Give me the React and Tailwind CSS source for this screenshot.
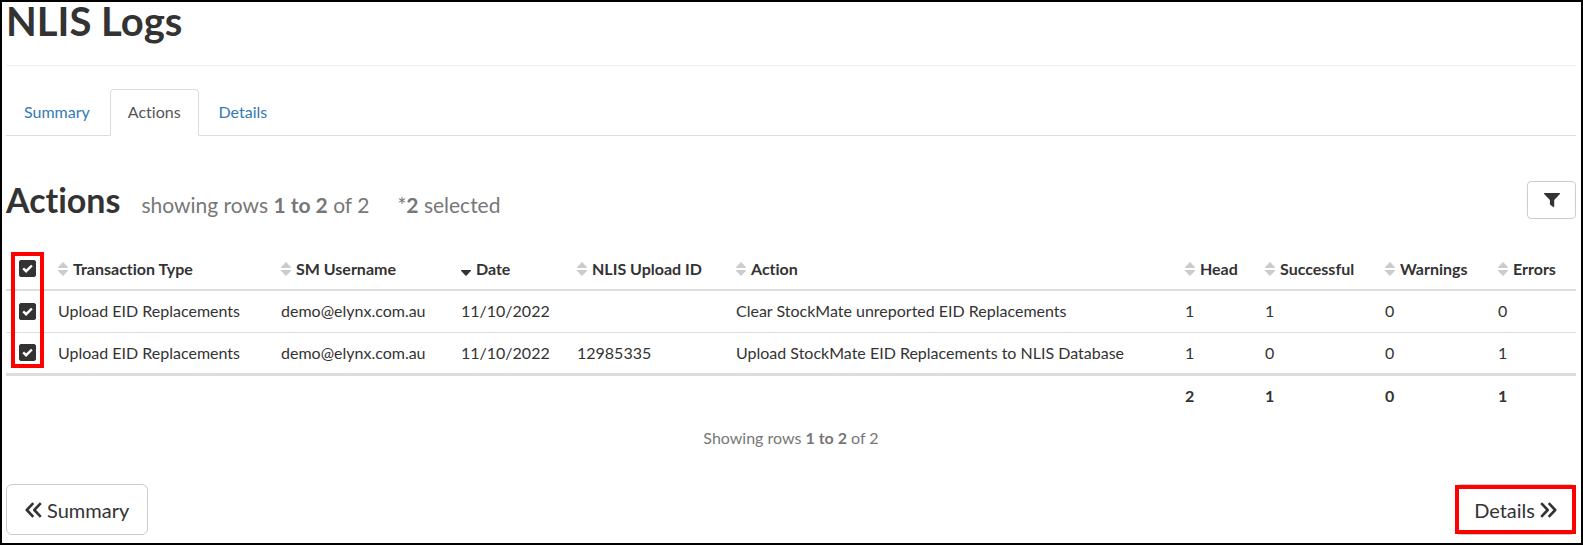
import React, { useState } from "react";

const tabs = ["Summary", "Actions", "Details"];

const columns = [
  { key: "type", label: "Transaction Type", width: "w-[223px]" },
  { key: "username", label: "SM Username", width: "w-[180px]" },
  { key: "date", label: "Date", width: "w-[116px]", sorted: true },
  { key: "uploadId", label: "NLIS Upload ID", width: "w-[159px]" },
  { key: "action", label: "Action", width: "" },
  { key: "head", label: "Head", width: "w-[80px]", total: true },
  { key: "successful", label: "Successful", width: "w-[120px]", total: true },
  { key: "warnings", label: "Warnings", width: "w-[113px]", total: true },
  { key: "errors", label: "Errors", width: "w-[86px]", total: true },
];

const rows = [
  {
    id: 1,
    type: "Upload EID Replacements",
    username: "demo@elynx.com.au",
    date: "11/10/2022",
    uploadId: "",
    action: "Clear StockMate unreported EID Replacements",
    head: 1,
    successful: 1,
    warnings: 0,
    errors: 0,
  },
  {
    id: 2,
    type: "Upload EID Replacements",
    username: "demo@elynx.com.au",
    date: "11/10/2022",
    uploadId: "12985335",
    action: "Upload StockMate EID Replacements to NLIS Database",
    head: 1,
    successful: 0,
    warnings: 0,
    errors: 1,
  },
];

function SortIcon({ sorted }) {
  if (sorted) {
    return (
      <svg className="w-[10px] h-[14px] shrink-0" viewBox="0 0 10 14" fill="#333" aria-hidden="true">
        <path d="M.6 8h8.8c.6 0 .8.5.4.9L5.6 13.5c-.3.3-.9.3-1.2 0L.2 8.9C-.2 8.5 0 8 .6 8z" />
      </svg>
    );
  }
  return (
    <svg className="w-[10px] h-[14px] shrink-0" viewBox="0 0 10 14" fill="#ccc" aria-hidden="true">
      <path d="M.6 6h8.8c.6 0 .8-.5.4-.9L5.6.5c-.3-.3-.9-.3-1.2 0L.2 5.1C-.2 5.5 0 6 .6 6z" />
      <path d="M.6 8h8.8c.6 0 .8.5.4.9L5.6 13.5c-.3.3-.9.3-1.2 0L.2 8.9C-.2 8.5 0 8 .6 8z" />
    </svg>
  );
}

function Checkbox({ label, checked, onChange }) {
  return (
    <span className="grid w-[17px] h-[17px]">
      <input
        type="checkbox"
        aria-label={label}
        checked={checked}
        onChange={onChange}
        className="peer col-start-1 row-start-1 w-[17px] h-[17px] appearance-none rounded-[2px] border border-[#333] checked:bg-[#333]"
      />
      <svg
        className="pointer-events-none invisible col-start-1 row-start-1 w-[17px] h-[17px] peer-checked:visible"
        viewBox="0 0 17 17"
        fill="none"
        stroke="#fff"
        strokeWidth="2.4"
        aria-hidden="true"
      >
        <path d="M4.2 8.4l2.9 2.8 5.8-5.7" />
      </svg>
    </span>
  );
}

function DoubleChevron({ left }) {
  return (
    <svg
      className="w-[17px] h-[16px]"
      viewBox="0 0 17 16"
      fill="none"
      stroke="#333"
      strokeWidth="2.6"
      strokeLinejoin="round"
      aria-hidden="true"
    >
      {left ? (
        <path d="M8.3 1.2L1.8 8l6.5 6.8M15.8 1.2L9.3 8l6.5 6.8" />
      ) : (
        <path d="M1.2 1.2L7.7 8l-6.5 6.8M8.7 1.2L15.2 8l-6.5 6.8" />
      )}
    </svg>
  );
}

export default function App() {
  const [activeTab, setActiveTab] = useState("Actions");
  const [selected, setSelected] = useState([1, 2]);

  function toggle(id) {
    setSelected(selected.includes(id) ? selected.filter((s) => s !== id) : [...selected, id]);
  }

  function toggleAll() {
    setSelected(selected.length === rows.length ? [] : rows.map((r) => r.id));
  }

  return (
    <div className="min-h-screen border-2 border-black bg-white pr-[5px] pb-[6px] pl-1 font-['Lato',sans-serif] text-base text-[#333] [font-variant-ligatures:none]">
      <h1 className="h-16 border-b border-[#eee] text-[40px] leading-[38px] font-bold">NLIS Logs</h1>

      <nav className="mt-[23px] flex gap-[2px] border-b border-[#ddd]">
        {tabs.map((tab) => (
          <a
            key={tab}
            href={`#${tab.toLowerCase()}`}
            onClick={() => setActiveTab(tab)}
            className={
              tab === activeTab
                ? "-mb-px rounded-t border border-[#ddd] border-b-white bg-white px-[17px] pt-[10px] pb-[11px] text-[#555]"
                : "-mb-px border border-transparent px-[17px] pt-[10px] pb-[11px] text-[#337ab7]"
            }
          >
            {tab}
          </a>
        ))}
      </nav>

      <div className="mt-[45px] flex items-start justify-between">
        <div className="flex items-baseline leading-[38px]">
          <h2 className="text-[34px] font-bold">Actions</h2>
          <span className="ml-[21px] text-[21px] text-[#777]">
            showing rows <b>1 to 2</b> of 2
          </span>
          <span className="ml-7 text-[21px] text-[#777]">
            *<b>{selected.length}</b> selected
          </span>
        </div>
        <button
          type="button"
          aria-label="Filter"
          className="flex h-[38px] w-[49px] items-center justify-center rounded border border-[#ccc] bg-white"
        >
          <svg className="w-4 h-[14px]" viewBox="0 0 16 14" fill="#333" aria-hidden="true">
            <path d="M.6 0h14.8c.6 0 .8.7.5 1.1L10.2 7v6.3c0 .6-.6.9-1 .6L6.3 11.8c-.3-.2-.4-.5-.4-.8V7L.1 1.1C-.2.7 0 0 .6 0z" />
          </svg>
        </button>
      </div>

      <div className="relative mt-6">
        <table className="w-full table-fixed text-left">
          <thead>
            <tr className="h-[42px] border-b-2 border-[#ddd]">
              <th className="w-11 pl-[13px]">
                <Checkbox
                  label="Select all rows"
                  checked={selected.length === rows.length}
                  onChange={toggleAll}
                />
              </th>
              {columns.map((col) => (
                <th key={col.key} className={`${col.width} px-2 font-bold`}>
                  <button type="button" className="flex items-center gap-[5px] whitespace-nowrap">
                    <SortIcon sorted={col.sorted} />
                    {col.label}
                  </button>
                </th>
              ))}
            </tr>
          </thead>
          <tbody>
            {rows.map((row) => (
              <tr key={row.id} className="h-[42px] border-t border-[#ddd]">
                <td className="pl-[13px]">
                  <Checkbox
                    label={`Select row ${row.id}`}
                    checked={selected.includes(row.id)}
                    onChange={() => toggle(row.id)}
                  />
                </td>
                {columns.map((col) => (
                  <td key={col.key} className="px-2 whitespace-nowrap">
                    {row[col.key]}
                  </td>
                ))}
              </tr>
            ))}
          </tbody>
          <tfoot>
            <tr className="h-[42px] border-t-3 border-[#ddd] font-bold">
              <td />
              {columns.map((col) => (
                <td key={col.key} className="px-2">
                  {col.total && rows.reduce((sum, row) => sum + row[col.key], 0)}
                </td>
              ))}
            </tr>
          </tfoot>
        </table>
        <div className="pointer-events-none absolute top-1 left-[5px] h-[116px] w-[33px] border-4 border-[#f00]" />
      </div>

      <p className="mt-[10px] text-center text-[#777]">
        Showing rows <b>1 to 2</b> of 2
      </p>

      <div className="mt-[34px] flex justify-between text-xl">
        <button
          type="button"
          className="flex h-[51px] items-center gap-[5px] rounded-md border border-[#ccc] bg-white px-[18px]"
        >
          <DoubleChevron left />
          Summary
        </button>
        <div className="relative">
          <button
            type="button"
            className="flex h-[51px] items-center gap-[5px] rounded-md border border-[#ccc] bg-white px-[18px]"
          >
            Details
            <DoubleChevron />
          </button>
          <div className="pointer-events-none absolute inset-x-0 inset-y-px border-4 border-[#f00]" />
        </div>
      </div>
    </div>
  );
}
